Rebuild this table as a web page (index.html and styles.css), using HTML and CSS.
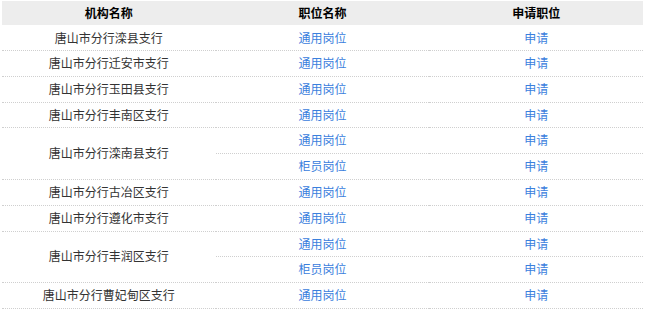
FILE: index.html
```html
<!DOCTYPE html>
<html lang="zh">
<head>
<meta charset="utf-8">
<title>岗位列表</title>
<link rel="stylesheet" href="styles.css">
</head>
<body>
<table class="jobs">
  <thead>
    <tr><th>机构名称</th><th>职位名称</th><th>申请职位</th></tr>
  </thead>
  <tbody>
    <tr><td>唐山市分行滦县支行</td><td><a class="link">通用岗位</a></td><td><a class="link">申请</a></td></tr>
    <tr><td>唐山市分行迁安市支行</td><td><a class="link">通用岗位</a></td><td><a class="link">申请</a></td></tr>
    <tr><td>唐山市分行玉田县支行</td><td><a class="link">通用岗位</a></td><td><a class="link">申请</a></td></tr>
    <tr><td>唐山市分行丰南区支行</td><td><a class="link">通用岗位</a></td><td><a class="link">申请</a></td></tr>
    <tr><td rowspan="2">唐山市分行滦南县支行</td><td><a class="link">通用岗位</a></td><td><a class="link">申请</a></td></tr>
    <tr><td><a class="link">柜员岗位</a></td><td><a class="link">申请</a></td></tr>
    <tr><td>唐山市分行古冶区支行</td><td><a class="link">通用岗位</a></td><td><a class="link">申请</a></td></tr>
    <tr><td>唐山市分行遵化市支行</td><td><a class="link">通用岗位</a></td><td><a class="link">申请</a></td></tr>
    <tr><td rowspan="2">唐山市分行丰润区支行</td><td><a class="link">通用岗位</a></td><td><a class="link">申请</a></td></tr>
    <tr><td><a class="link">柜员岗位</a></td><td><a class="link">申请</a></td></tr>
    <tr><td>唐山市分行曹妃甸区支行</td><td><a class="link">通用岗位</a></td><td><a class="link">申请</a></td></tr>
  </tbody>
</table>
</body>
</html>
```

FILE: styles.css
```css
html, body {
  margin: 0;
  padding: 0;
  background: #fff;
}
body {
  padding: 1px 6px 0 2px;
  font-family: "Noto Sans CJK SC", "Noto Sans", sans-serif;
  font-size: 12px;
  color: #333;
}
.jobs {
  width: 641px;
  border-collapse: separate;
  border-spacing: 0;
  table-layout: fixed;
}
.jobs th {
  background: #ededed;
  color: #000;
  font-weight: bold;
  height: 24px;
  line-height: 24px;
  padding: 0;
  text-align: center;
}
.jobs td {
  padding: 0;
  line-height: 24.8px;
  text-align: center;
  border-bottom: 1px dotted #cfcfcf;
  white-space: nowrap;
}
.jobs tbody tr:first-child td {
  line-height: 25px;
}
.link {
  color: #3a80dd;
  text-decoration: none;
  cursor: pointer;
}
```
